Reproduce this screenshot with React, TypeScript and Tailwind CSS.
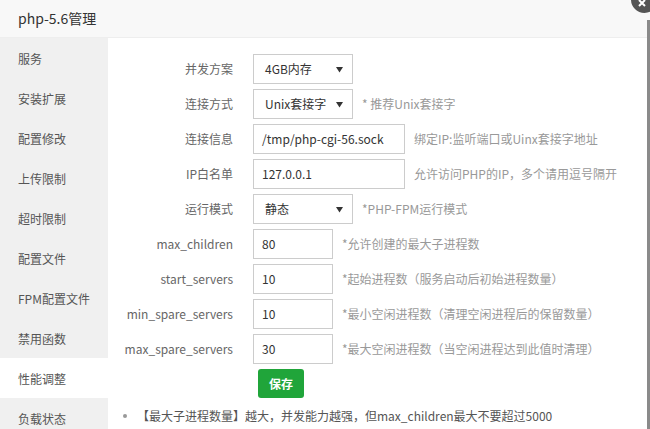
import React from "react";

const menu = [
  "服务",
  "安装扩展",
  "配置修改",
  "上传限制",
  "超时限制",
  "配置文件",
  "FPM配置文件",
  "禁用函数",
  "性能调整",
  "负载状态",
];

type Row =
  | { label: string; kind: "select"; value: string; width: string; hint?: string }
  | { label: string; kind: "input"; value: string; width: string; hint?: string };

const rows: Row[] = [
  { label: "并发方案", kind: "select", value: "4GB内存", width: "w-[100px]" },
  { label: "连接方式", kind: "select", value: "Unix套接字", width: "w-[100px]", hint: "* 推荐Unix套接字" },
  { label: "连接信息", kind: "input", value: "/tmp/php-cgi-56.sock", width: "w-[152px]", hint: "绑定IP:监听端口或Uinx套接字地址" },
  { label: "IP白名单", kind: "input", value: "127.0.0.1", width: "w-[152px]", hint: "允许访问PHP的IP，多个请用逗号隔开" },
  { label: "运行模式", kind: "select", value: "静态", width: "w-[100px]", hint: "*PHP-FPM运行模式" },
  { label: "max_children", kind: "input", value: "80", width: "w-[80px]", hint: "*允许创建的最大子进程数" },
  { label: "start_servers", kind: "input", value: "10", width: "w-[80px]", hint: "*起始进程数（服务启动后初始进程数量）" },
  { label: "min_spare_servers", kind: "input", value: "10", width: "w-[80px]", hint: "*最小空闲进程数（清理空闲进程后的保留数量）" },
  { label: "max_spare_servers", kind: "input", value: "30", width: "w-[80px]", hint: "*最大空闲进程数（当空闲进程达到此值时清理）" },
];

export default function App() {
  return (
    <div
      className="relative w-[650px] h-[429px] overflow-hidden bg-white text-[12px] text-[#555]"
      style={{ fontFamily: '"Microsoft YaHei", "Noto Sans CJK SC", "Noto Sans", sans-serif' }}
    >
      {/* HEADER */}
      <div className="h-[38px] bg-[#f8f8f8] border-b border-[#eee] flex items-center pl-[18px] text-[14px] text-[#333]">
        php-5.6管理
      </div>

      <div className="flex h-[391px]">
        {/* SIDEBAR */}
        <div className="w-[108px] shrink-0 bg-[#f0f0f0] flex flex-col">
          {menu.map((m) => (
            <div
              key={m}
              className={
                "h-[40px] shrink-0 flex items-center pl-[18px] pt-[2px] text-[12px] text-[#555] " +
                (m === "性能调整" ? "bg-white" : "")
              }
            >
              {m}
            </div>
          ))}
        </div>

        {/* CONTENT */}
        <div className="flex-1 pt-[16px] pl-[15px]">
          {rows.map((r) => (
            <div key={r.label} className="flex items-center h-[30px] mb-[5px]">
              <div className="w-[110px] text-right text-[#666]">{r.label}</div>
              <div className="ml-[20px] flex items-center">
                {r.kind === "select" ? (
                  <div
                    className={
                      r.width +
                      " h-[30px] border border-[#ccc] flex items-center justify-between pl-[11px] pr-[9px] text-[#333]"
                    }
                  >
                    <span>{r.value}</span>
                    <svg width="7" height="7" viewBox="0 0 7 7">
                      <path d="M0 1h7L3.5 6.5z" fill="#333" />
                    </svg>
                  </div>
                ) : (
                  <div
                    className={
                      r.width +
                      " h-[30px] border border-[#ccc] flex items-center pl-[8px] text-[#333] whitespace-nowrap overflow-hidden"
                    }
                  >
                    {r.value}
                  </div>
                )}
                {r.hint && <span className="ml-[9px] text-[#999] whitespace-nowrap">{r.hint}</span>}
              </div>
            </div>
          ))}

          <div className="pl-[135px] mt-[1px]">
            <button className="h-[29px] px-[11px] rounded-[3px] bg-[#20a53a] text-white text-[12px] font-bold">
              保存
            </button>
          </div>

          <div className="mt-[9px] flex items-center text-[#555] whitespace-nowrap">
            <span className="w-[14px] h-[4px] flex items-center">
              <span className="block w-[4px] h-[4px] rounded-full bg-[#999]" />
            </span>
            <span>【最大子进程数量】越大，并发能力越强，但max_children最大不要超过5000</span>
          </div>
        </div>
      </div>

      {/* dialog edge + close */}
      <div className="absolute right-0 top-[20px] bottom-0 w-[3px] bg-[#8a8a8a]" />
      <div className="absolute left-[631px] top-[-14px] w-[27px] h-[27px] rounded-full bg-[#555]">
        <svg className="absolute left-[7px] top-[13px]" width="8" height="8" viewBox="0 0 8 8">
          <path d="M1 1l6 6M7 1L1 7" stroke="#fff" strokeWidth="2" />
        </svg>
      </div>
    </div>
  );
}
